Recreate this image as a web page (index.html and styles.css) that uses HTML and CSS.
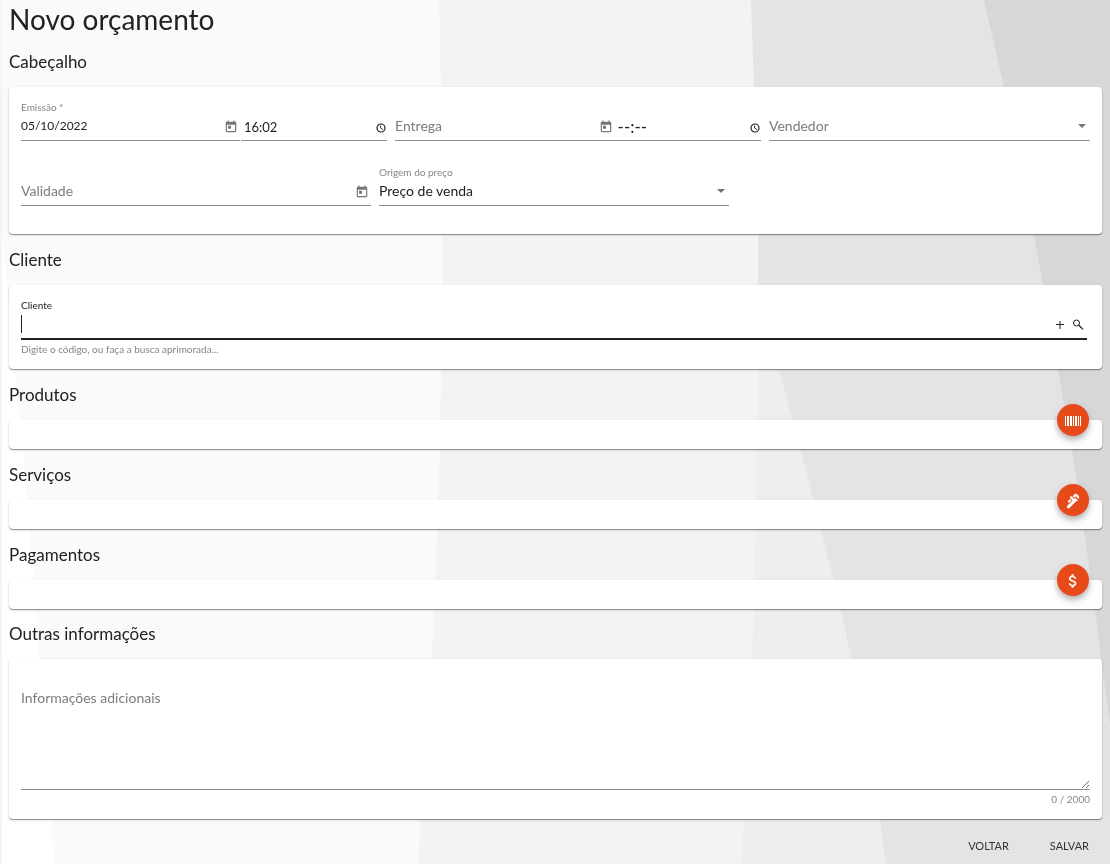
FILE: index.html
```html
<!DOCTYPE html>
<html lang="pt-BR">
<head>
<meta charset="utf-8">
<meta name="viewport" content="width=device-width, initial-scale=1">
<title>Novo orçamento</title>
<link rel="stylesheet" href="styles.css">
</head>
<body>
<svg class="backdrop" viewBox="0 0 1110 864" preserveAspectRatio="none" aria-hidden="true">
  <rect width="1110" height="864" fill="#fafafa"/>
  <path fill="#fff" d="M3 240L15 370L23 450L36 610L51 820L54 864H0V240Z"/>
  <path fill="#f3f3f3" d="M439 0L441 87L443 235V285L441 370L440 450L434 610L432 658L421 820L418 864H1110V0Z"/>
  <path fill="#eee" d="M757 280L759 370L757 450L754 608L752 658L744 820L741 864H1110V280Z"/>
  <path fill="#e4e4e4" d="M751 0L754 87L758 235V290L779 370L801 450L821 530L841 610L851 658L880 820L886 864H1110V0Z"/>
  <path fill="#d7d7d7" d="M984 0L1004 87L1034 235L1043 285L1058 370L1072 450L1084 530L1095 608L1101 658L1110 724V0Z"/>
  <rect width="2" height="864" fill="#f4f4f4"/>
</svg>
<svg class="sprite" aria-hidden="true">
  <symbol id="calendar" viewBox="0 0 24 24"><path d="M19 3h-1V1h-2v2H8V1H6v2H5c-1.1 0-2 .9-2 2v14c0 1.1.9 2 2 2h14c1.1 0 2-.9 2-2V5c0-1.1-.9-2-2-2zm0 16H5V8h14v11zM7 10h5v5H7z"/></symbol>
  <symbol id="clock" viewBox="0 0 12 12"><circle cx="6" cy="6" r="4" fill="none" stroke="currentColor" stroke-width="1.2"/><path d="M5.5 3.6V6L8 7.6" fill="none" stroke="currentColor" stroke-width=".9"/></symbol>
  <symbol id="arrow" viewBox="0 0 8 4"><path d="M0 0h8L4 4z"/></symbol>
</svg>
<main class="page">
  <h1 class="title">Novo orçamento</h1>
  <form>
    <h2 class="heading">Cabeçalho</h2>
    <section class="card card-header">
      <div class="row">
        <div class="pair">
          <div class="field date">
            <label class="label" for="emissao">Emissão *</label>
            <div class="control"><input id="emissao" type="text" value="05/10/2022"><button class="icon-button" type="button" aria-label="Abrir calendário"><svg class="icon"><use href="#calendar"/></svg></button></div>
          </div>
          <div class="field time">
            <span class="label"></span>
            <div class="control"><input type="text" value="16:02" aria-label="Hora de emissão"><button class="icon-button dark" type="button" aria-label="Escolher hora"><svg class="icon-clock"><use href="#clock"/></svg></button></div>
          </div>
        </div>
        <div class="pair joined">
          <div class="field date">
            <span class="label"></span>
            <div class="control"><input type="text" placeholder="Entrega" aria-label="Entrega"><button class="icon-button" type="button" aria-label="Abrir calendário"><svg class="icon"><use href="#calendar"/></svg></button></div>
          </div>
          <div class="field time">
            <span class="label"></span>
            <div class="control"><input class="blank" type="text" value="--:--" aria-label="Hora de entrega"><button class="icon-button dark" type="button" aria-label="Escolher hora"><svg class="icon-clock"><use href="#clock"/></svg></button></div>
          </div>
        </div>
        <div class="field seller">
          <span class="label"></span>
          <div class="control"><select class="empty" aria-label="Vendedor"><option>Vendedor</option></select><svg class="arrow"><use href="#arrow"/></svg></div>
        </div>
      </div>
      <div class="row thirds">
        <div class="field">
          <span class="label"></span>
          <div class="control"><input type="text" placeholder="Validade" aria-label="Validade"><button class="icon-button" type="button" aria-label="Abrir calendário"><svg class="icon"><use href="#calendar"/></svg></button></div>
        </div>
        <div class="field">
          <label class="label" for="origem">Origem do preço</label>
          <div class="control"><select id="origem"><option>Preço de venda</option></select><svg class="arrow"><use href="#arrow"/></svg></div>
        </div>
      </div>
    </section>

    <h2 class="heading">Cliente</h2>
    <section class="card card-client">
      <div class="field active">
        <label class="label" for="cliente">Cliente</label>
        <div class="control">
          <span class="caret"></span><input id="cliente" type="text">
          <button class="icon-button dark" type="button" aria-label="Adicionar cliente"><svg class="icon" viewBox="0 0 14 14"><path d="M3 7.5h8M7 4v8" fill="none" stroke="currentColor"/></svg></button>
          <button class="icon-button dark" type="button" aria-label="Buscar cliente"><svg class="icon" viewBox="0 0 14 14"><g fill="none" stroke="currentColor"><circle cx="5.5" cy="6" r="3"/><path d="M7.8 8.2L12 12.4" stroke-width="1.3"/></g></svg></button>
        </div>
      </div>
      <p class="hint">Digite o código, ou faça a busca aprimorada...</p>
    </section>

    <h2 class="heading">Produtos</h2>
    <section class="card card-list">
      <button class="fab" type="button" aria-label="Adicionar produto"><svg class="fab-icon" viewBox="0 0 18 18"><path d="M1 4h1v10H1zM3 4h2v10H3zM6 4h2v10H6zM9 4h1v10H9zM11 4h2v10h-2zM14 4h1v10h-1zM16 4h1v10h-1z"/></svg></button>
    </section>

    <h2 class="heading">Serviços</h2>
    <section class="card card-list">
      <button class="fab" type="button" aria-label="Adicionar serviço"><svg class="fab-icon" viewBox="0 0 24 24"><path d="M19.28 4.93l-2.12-2.12c-.78-.78-2.05-.78-2.83 0L11.5 5.64l2.12 2.12 2.12-2.12 3.54 3.54c1.17-1.18 1.17-3.08 0-4.25zM5.49 13.77c.59.59 1.54.59 2.12 0l2.47-2.47-2.12-2.13-2.47 2.47c-.59.59-.59 1.54 0 2.13zM15.04 7.76l-1.42 1.42L10.44 6c-.59-.6-1.54-.6-2.12-.01-.59.59-.59 1.54 0 2.12l3.18 3.18-7.07 7.07c-.78.78-.78 2.05 0 2.83.78.78 2.05.78 2.83 0L16.45 12c.39.39 1.02.39 1.41 0 .39-.39.39-1.02 0-1.41z"/></svg></button>
    </section>

    <h2 class="heading">Pagamentos</h2>
    <section class="card card-list">
      <button class="fab" type="button" aria-label="Adicionar pagamento"><svg class="fab-icon" viewBox="0 0 24 24"><path d="M11.8 10.9c-2.27-.59-3-1.2-3-2.15 0-1.09 1.01-1.85 2.7-1.85 1.78 0 2.44.85 2.5 2.1h2.21c-.07-1.72-1.12-3.3-3.21-3.81V3h-3v2.16c-1.94.42-3.5 1.68-3.5 3.61 0 2.31 1.91 3.46 4.7 4.13 2.5.6 3 1.48 3 2.41 0 .69-.49 1.79-2.7 1.79-2.06 0-2.87-.92-2.98-2.1h-2.2c.12 2.19 1.76 3.42 3.68 3.83V21h3v-2.15c1.95-.37 3.5-1.5 3.5-3.55 0-2.84-2.43-3.81-4.7-4.4z"/></svg></button>
    </section>

    <h2 class="heading heading-notes">Outras informações</h2>
    <section class="card card-notes">
      <textarea placeholder="Informações adicionais" aria-label="Informações adicionais" maxlength="2000"></textarea>
      <p class="hint counter">0 / 2000</p>
    </section>

    <div class="actions">
      <button class="text-button" type="button">VOLTAR</button>
      <button class="text-button" type="submit">SALVAR</button>
    </div>
  </form>
</main>
</body>
</html>
```

FILE: styles.css
```css
* {
  box-sizing: border-box;
}

body {
  margin: 0;
  background: #fafafa;
  color: #212121;
  font-family: Lato, "Open Sans", sans-serif;
  font-size: 14px;
}

.backdrop {
  position: fixed;
  inset: 0;
  z-index: -1;
  width: 100%;
  height: 100%;
}

.sprite {
  display: none;
}

.page {
  padding: 2px 8px 0 9px;
}

.title {
  margin: 0;
  font-size: 28px;
  font-weight: 400;
  line-height: 34px;
}

.heading {
  margin: 0;
  font-size: 17px;
  font-weight: 400;
  line-height: 51px;
}

.heading-notes {
  line-height: 50px;
}

.card {
  position: relative;
  padding: 13px 12px 12px;
  border-radius: 4px;
  background: #fff;
  box-shadow: 0 1px 1px rgba(0, 0, 0, 0.4), 0 1px 3px rgba(0, 0, 0, 0.12);
}

.card-header {
  display: grid;
  gap: 24px;
  padding-bottom: 28px;
}

.card-client {
  padding-right: 15px;
}

.card-list {
  height: 29px;
  padding: 0;
}

.row {
  display: flex;
  gap: 8px;
}

.thirds {
  display: grid;
  grid-template-columns: repeat(3, 1fr);
  padding-right: 3px;
}

.pair {
  display: flex;
  flex: 366 1 0;
  gap: 1px;
  min-width: 0;
}

.joined {
  gap: 0;
}

.field {
  min-width: 0;
}

.date {
  flex: 3 1 0;
}

.time {
  flex: 2 1 0;
}

.seller {
  flex: 321 1 0;
}

.label {
  display: block;
  height: 14px;
  color: #858585;
  font-size: 10px;
  line-height: 14px;
}

.control {
  display: flex;
  align-items: center;
  height: 27px;
  padding-bottom: 2px;
  border-bottom: 1px solid #8f8f8f;
}

.time .control {
  padding-bottom: 0;
}

.active .label {
  color: #212121;
}

.active .control {
  height: 28px;
  border-bottom: 2px solid #212121;
}

input,
select,
textarea {
  flex: 1;
  min-width: 0;
  padding: 0;
  border: 0;
  outline: 0;
  background: none;
  color: #212121;
  font: inherit;
  line-height: 20px;
}

select {
  appearance: none;
}

.empty,
::placeholder {
  color: #7c7c7c;
  opacity: 1;
}

#emissao {
  font-size: 12px;
}

.time input {
  padding-left: 3px;
  font-size: 13px;
}

.time .blank {
  font-size: 17px;
}

.icon-button {
  display: flex;
  padding: 2px 2px 0;
  border: 0;
  background: none;
  color: #757575;
}

.dark {
  color: #212121;
}

.active .icon-button {
  padding-top: 0;
}

.time .icon-button {
  padding: 1px 0 0;
}

.icon {
  width: 14px;
  height: 14px;
  fill: currentColor;
}

.icon-clock {
  width: 12px;
  height: 12px;
}

.arrow {
  width: 8px;
  height: 4px;
  margin-right: 4px;
  fill: #757575;
}

.caret {
  width: 1px;
  height: 18px;
  background: #212121;
}

.hint {
  margin: 2px 0 0;
  color: #858585;
  font-size: 10px;
  line-height: 15px;
}

.counter {
  text-align: right;
}

.fab {
  position: absolute;
  top: -16px;
  right: 13px;
  display: flex;
  align-items: center;
  justify-content: center;
  width: 32px;
  height: 32px;
  padding: 2px 0 0;
  border: 0;
  border-radius: 50%;
  background: #e64a19;
  box-shadow: 0 3px 5px rgba(0, 0, 0, 0.2), 0 5px 10px rgba(0, 0, 0, 0.14);
}

.fab-icon {
  width: 18px;
  height: 18px;
  fill: #fff;
}

.card-notes {
  padding-top: 29px;
}

textarea {
  display: block;
  width: 100%;
  height: 102px;
  border-bottom: 1px solid #8f8f8f;
  resize: vertical;
}

.actions {
  display: flex;
  justify-content: flex-end;
  gap: 9px;
  padding-top: 10px;
}

.text-button {
  padding: 0 13px 0 19px;
  border: 0;
  background: none;
  color: #333;
  font: inherit;
  font-size: 11px;
  line-height: 34px;
}
```
